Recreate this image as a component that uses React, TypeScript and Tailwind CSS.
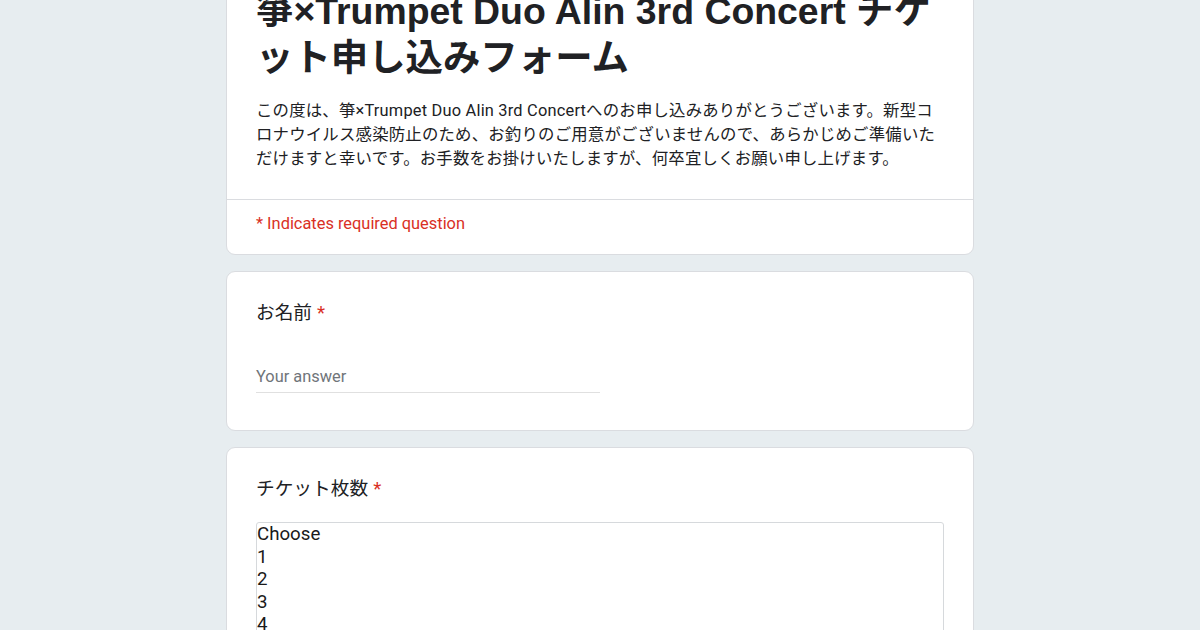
const jp = { fontFamily: 'Roboto, "Noto Sans CJK JP", sans-serif' };

const Card = ({ children, className = '' }: { children: React.ReactNode; className?: string }) => (
  <div className={`bg-white border border-[#dadce0] rounded-[9px] ${className}`}>{children}</div>
);

const Required = () => <span className="text-[#d93025] ml-[5px]">*</span>;

const App = () => {
  return (
    <div className="min-h-[630px] h-[630px] overflow-hidden bg-[#e7edf0]" style={jp}>
      <div className="w-[748px] mx-auto mt-[-41px] flex flex-col gap-[16px]">
        <Card>
          <div className="px-[29px] pt-[28px] pb-[28px]">
            <h1
              className="text-[37.4px] leading-[46.8px] font-bold text-[#202124]"
              style={{ fontFamily: '"Liberation Sans", "Noto Sans CJK JP", sans-serif' }}
            >
              箏×Trumpet Duo Alin 3rd Concert チケット申し込みフォーム
            </h1>
            <p className="mt-[17px] text-[16.4px] leading-[24px] text-[#202124] tracking-[0.2px]">
              この度は、箏×Trumpet Duo Alin 3rd Concertへのお申し込みありがとうございます。新型コロナウイルス感染防止のため、お釣りのご用意がございませんので、あらかじめご準備いただけますと幸いです。お手数をお掛けいたしますが、何卒宜しくお願い申し上げます。
            </p>
          </div>
          <div className="border-t border-[#dadce0] px-[29px] pt-[12px] pb-[19px]">
            <p className="text-[16.4px] leading-[23.4px] text-[#d93025]">* Indicates required question</p>
          </div>
        </Card>

        <Card className="px-[29px] pt-[27px] pb-[37px]">
          <div className="text-[18.7px] leading-[28px] text-[#202124]">
            お名前
            <Required />
          </div>
          <div className="mt-[38px] w-1/2 border-b border-[#e0e0e0] pb-[3px]">
            <span className="block text-[16.4px] leading-[24px] text-[#70757a]">Your answer</span>
          </div>
        </Card>

        <Card className="px-[29px] pt-[27px] pb-[30px]">
          <div className="text-[18.7px] leading-[28px] text-[#202124]">
            チケット枚数
            <Required />
          </div>
          <div className="mt-[19px] border border-[#d6d9dc] rounded-[3px] text-[18.7px] leading-[22.5px] text-[#1a1a1a]">
            {['Choose', '1', '2', '3', '4', '5', '6'].map((o) => (
              <div key={o}>{o}</div>
            ))}
          </div>
        </Card>
      </div>
    </div>
  );
};

export default App;
